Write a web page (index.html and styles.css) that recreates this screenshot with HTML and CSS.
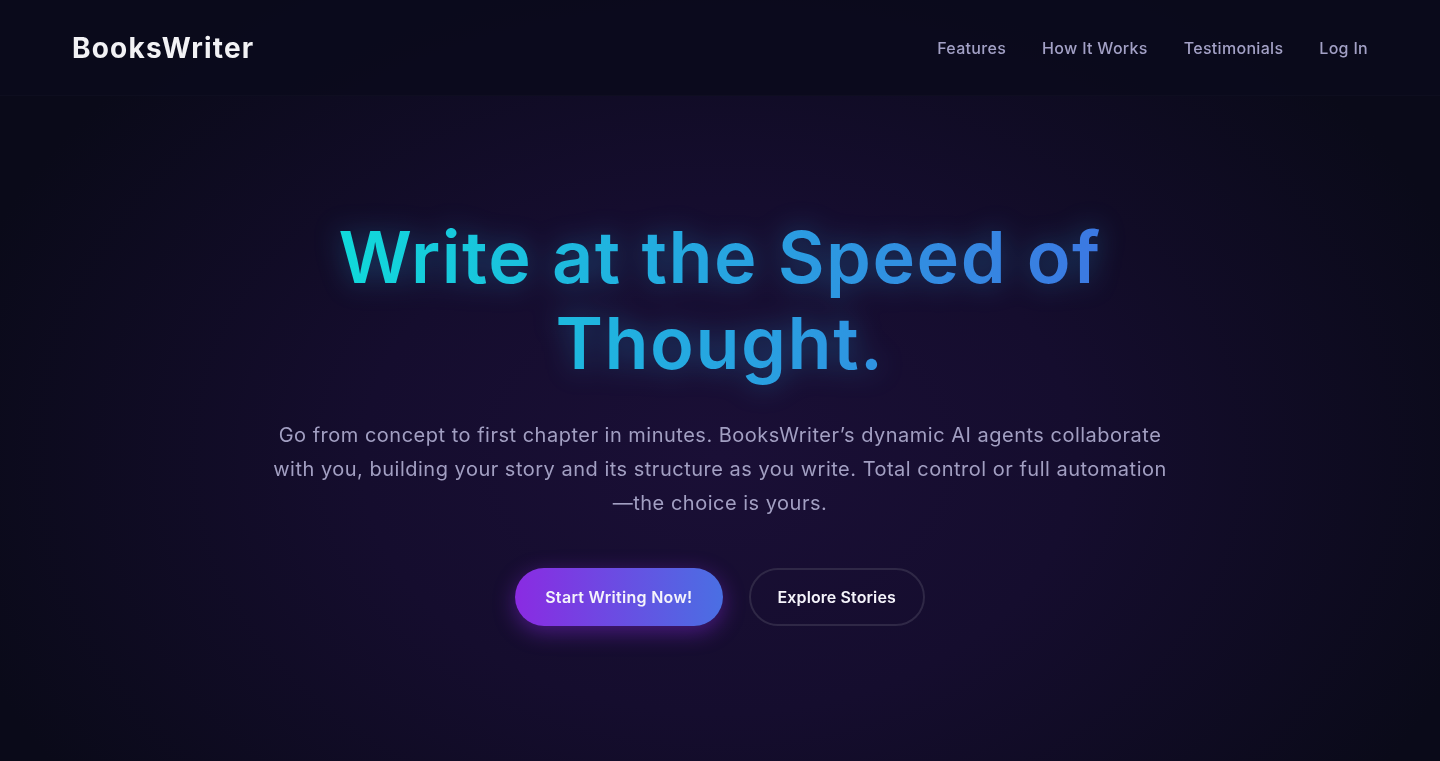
FILE: index.html
```html
<!DOCTYPE html>
<html lang="en">
<head>
<meta charset="utf-8">
<title>BooksWriter</title>
<link rel="stylesheet" href="styles.css">
</head>
<body>
<header class="site-header">
  <div class="logo">BooksWriter</div>
  <nav class="nav">
    <a href="#">Features</a>
    <a href="#">How It Works</a>
    <a href="#">Testimonials</a>
    <a href="#">Log In</a>
  </nav>
</header>
<main class="hero">
  <h1 class="title">Write at the Speed of<br>Thought.</h1>
  <p class="lead">Go from concept to first chapter in minutes. BooksWriter’s dynamic AI agents collaborate with you, building your story and its structure as you write. Total control or full automation—the choice is yours.</p>
  <div class="actions">
    <a class="btn btn-primary" href="#">Start Writing Now!</a>
    <a class="btn btn-ghost" href="#">Explore Stories</a>
  </div>
</main>
</body>
</html>
```
FILE: styles.css
```css
* { box-sizing: border-box; }
html, body { margin: 0; height: 100%; }
body {
  background: #0a0a19;
  font-family: "Inter", "Open Sans", sans-serif;
  color: #e8e6f5;
  overflow: hidden;
}
body::before {
  content: "";
  position: fixed;
  inset: 0;
  background: radial-gradient(ellipse 55% 75% at 50% 60%, #1a0f36 0%, #150d2e 45%, #0a0a19 100%);
  z-index: -1;
}
.site-header {
  height: 96px;
  display: flex;
  align-items: center;
  justify-content: space-between;
  padding: 0 72px;
  background: rgba(11, 11, 28, 0.85);
  border-bottom: 1px solid rgba(255, 255, 255, 0.02);
}
.logo {
  font-size: 28px;
  font-weight: 700;
  color: #f2f2f5;
  letter-spacing: 1.2px;
}
.nav { display: flex; gap: 36px; }
.nav a {
  color: #a3a1c6;
  text-decoration: none;
  font-size: 16px;
  font-weight: 500;
  letter-spacing: 0.3px;
}
.hero {
  display: flex;
  flex-direction: column;
  align-items: center;
  text-align: center;
  padding-top: 118px;
}
.title {
  display: inline-block;
  margin: 0;
  font-size: 72px;
  line-height: 86px;
  font-weight: 600;
  letter-spacing: 1.5px;
  background: linear-gradient(90deg, #10dada 0%, #22aee0 40%, #3c78e2 100%);
  -webkit-background-clip: text;
  background-clip: text;
  -webkit-text-fill-color: transparent;
  color: transparent;
  filter: drop-shadow(0 0 14px rgba(40, 170, 240, 0.35));
}
.lead {
  max-width: 906px;
  margin: 32px 0 0;
  font-size: 20px;
  line-height: 34px;
  letter-spacing: 0.5px;
  color: #a29fc2;
}
.actions {
  display: flex;
  gap: 26px;
  margin-top: 48px;
}
.btn {
  height: 58px;
  display: inline-flex;
  align-items: center;
  justify-content: center;
  padding: 0 30px;
  border-radius: 29px;
  font-size: 16px;
  font-weight: 600;
  letter-spacing: 0.3px;
  color: #f5f4fb;
  text-decoration: none;
}
.btn-primary {
  background: linear-gradient(90deg, #8a2be2 0%, #4a6fe3 100%);
  box-shadow: 0 6px 22px rgba(138, 43, 226, 0.45);
}
.btn-ghost {
  padding: 0 27px;
  letter-spacing: 0.1px;
  border: 2px solid #2f2846;
}
```
